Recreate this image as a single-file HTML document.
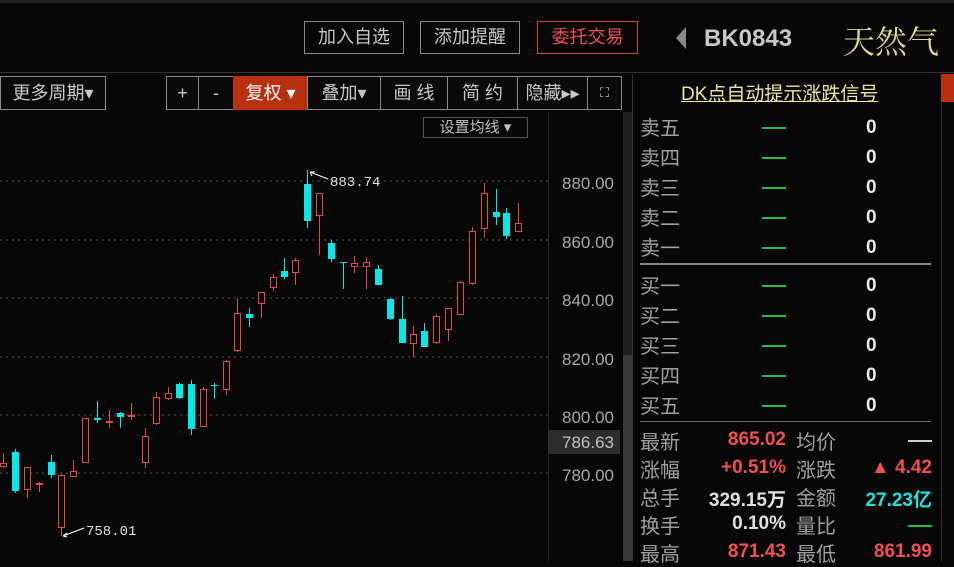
<!DOCTYPE html>
<html><head><meta charset="utf-8"><style>
body{margin:0;width:954px;height:561px;background:#070707;overflow:hidden;position:relative;font-family:"Liberation Sans","Noto Sans CJK SC",sans-serif;color:#c8c8c8}
.a{position:absolute;white-space:nowrap}
.btn{position:absolute;top:21px;height:33px;border:1px solid #8a8a8a;box-sizing:border-box;font-size:18px;line-height:31px;text-align:center;color:#c8c8c8}
.tb{position:absolute;top:76px;height:34px;border:1px solid #8a8a8a;box-sizing:border-box;font-size:18px;line-height:32px;text-align:center;color:#c8c8c8;background:#0a0a0a}
.lb{position:absolute;left:640px;font-size:20px;color:#a0a0a0}
.dash{position:absolute;left:762px;width:24px;height:2px;background:#20c040}
.z{position:absolute;left:866px;font-size:19px;font-weight:bold;color:#e8e8e8}
.v{position:absolute;font-size:19px;font-weight:bold;text-align:right}
</style></head><body>
<div class="a" style="left:0;top:0;width:954px;height:3px;background:#222"></div>
<div class="btn" style="left:304px;width:100px">加入自选</div>
<div class="btn" style="left:420px;width:100px">添加提醒</div>
<div class="btn" style="left:537px;width:101px;border-color:#d84040;color:#f05050">委托交易</div>
<div class="a" style="left:676px;top:27px;width:0;height:0;border-top:11px solid transparent;border-bottom:11px solid transparent;border-right:10px solid #888"></div>
<div class="a" style="left:704px;top:25px;font-size:24px;font-weight:bold;color:#c8c8c8">BK0843</div>
<div class="a" style="left:843px;top:17px;font-size:32px;color:#e0d890;font-family:'Noto Serif CJK SC',serif">天然气</div>
<div class="a" style="left:0;top:72px;width:954px;height:1px;background:#333"></div>
<div class="tb" style="left:0;width:106px">更多周期▾</div>
<div class="tb" style="left:166px;width:33px">+</div>
<div class="tb" style="left:198px;width:36px">-</div>
<div class="tb" style="left:233px;width:75px;background:#b83010;color:#fff;border-color:#b83010">复权 ▾</div>
<div class="tb" style="left:307px;width:74px">叠加▾</div>
<div class="tb" style="left:380px;width:68px">画 线</div>
<div class="tb" style="left:447px;width:71px">简 约</div>
<div class="tb" style="left:517px;width:71px">隐藏▸▸</div>
<div class="tb" style="left:587px;width:35px;font-size:13px">⛶</div>
<div class="a" style="left:423px;top:117px;width:105px;height:21px;border:1px solid #555;box-sizing:border-box;font-size:15px;line-height:19px;text-align:center;color:#c0c0c0">设置均线 ▾</div>
<div class="a" style="left:548px;top:112px;width:1px;height:449px;background:#222"></div>
<div class="a" style="left:623px;top:112px;width:9px;height:449px;background:#1e1e1e"></div>
<div class="a" style="left:623px;top:355px;width:9px;height:206px;background:#3a3a3a"></div>
<svg class="a" style="left:0;top:0" width="620" height="561">
<g stroke="#555" stroke-dasharray="2,4" stroke-width="1">
<line x1="0" y1="181" x2="548" y2="181"/><line x1="0" y1="240" x2="548" y2="240"/><line x1="0" y1="298" x2="548" y2="298"/><line x1="0" y1="357" x2="548" y2="357"/><line x1="0" y1="415" x2="548" y2="415"/><line x1="0" y1="473" x2="548" y2="473"/></g>
<g font-size="17" fill="#a8a8a8" font-family="Liberation Sans" text-anchor="end">
<text x="614" y="189">880.00</text><text x="614" y="248">860.00</text><text x="614" y="306">840.00</text><text x="614" y="365">820.00</text><text x="614" y="423">800.00</text><text x="614" y="481">780.00</text></g>
<rect x="548" y="430" width="72" height="24" fill="#2c2c2c"/>
<text x="614" y="448" font-size="17" fill="#c0c0c0" text-anchor="end" font-family="Liberation Sans">786.63</text>
<g id="c"></g>
<text x="330" y="186" font-size="14" fill="#e0e0e0" font-family="Liberation Mono">883.74</text>
<path d="M310 172 L328 179 M310 172 l5 0 M310 172 l2 4" stroke="#fff" fill="none"/>
<text x="86" y="535" font-size="14" fill="#e0e0e0" font-family="Liberation Mono">758.01</text>
<path d="M63 536 L84 528 M63 536 l4 -3 M63 536 l4 1" stroke="#fff" fill="none"/>
</svg>
<div class="a" style="left:632px;top:74px;width:308px;height:487px;border-left:1px solid #333;border-right:1px solid #333"></div>
<div class="a" style="left:941px;top:74px;width:13px;height:28px;background:#b83010"></div>
<div class="a" style="left:681px;top:79px;font-size:19px;color:#e8e8a0;text-decoration:underline">DK点自动提示涨跌信号</div>
<div class="lb" style="top:112px">卖五</div><div class="dash" style="top:127px"></div><div class="z" style="top:117px">0</div>
<div class="lb" style="top:142px">卖四</div><div class="dash" style="top:157px"></div><div class="z" style="top:147px">0</div>
<div class="lb" style="top:172px">卖三</div><div class="dash" style="top:187px"></div><div class="z" style="top:177px">0</div>
<div class="lb" style="top:202px">卖二</div><div class="dash" style="top:217px"></div><div class="z" style="top:207px">0</div>
<div class="lb" style="top:232px">卖一</div><div class="dash" style="top:247px"></div><div class="z" style="top:237px">0</div>
<div class="a" style="left:640px;top:263px;width:291px;height:2px;background:#888"></div>
<div class="lb" style="top:270px">买一</div><div class="dash" style="top:285px"></div><div class="z" style="top:275px">0</div>
<div class="lb" style="top:300px">买二</div><div class="dash" style="top:315px"></div><div class="z" style="top:305px">0</div>
<div class="lb" style="top:330px">买三</div><div class="dash" style="top:345px"></div><div class="z" style="top:335px">0</div>
<div class="lb" style="top:360px">买四</div><div class="dash" style="top:375px"></div><div class="z" style="top:365px">0</div>
<div class="lb" style="top:390px">买五</div><div class="dash" style="top:405px"></div><div class="z" style="top:395px">0</div>
<div class="a" style="left:640px;top:421px;width:291px;height:1px;background:#666"></div>
<div class="lb" style="top:426px">最新</div><div class="v" style="top:429px;right:168px;color:#f05050">865.02</div>
<div class="lb" style="top:426px;left:796px">均价</div><div class="a" style="left:908px;top:440px;width:24px;height:2px;background:#ccc"></div>
<div class="lb" style="top:454px">涨幅</div><div class="v" style="top:457px;right:168px;color:#f05050">+0.51%</div>
<div class="lb" style="top:454px;left:796px">涨跌</div><div class="v" style="top:457px;right:22px;color:#f05050">▲ 4.42</div>
<div class="lb" style="top:482px">总手</div><div class="v" style="top:485px;right:168px;color:#e0e0e0">329.15万</div>
<div class="lb" style="top:482px;left:796px">金额</div><div class="v" style="top:485px;right:22px;color:#20e0e0">27.23亿</div>
<div class="lb" style="top:510px">换手</div><div class="v" style="top:513px;right:168px;color:#e0e0e0">0.10%</div>
<div class="lb" style="top:510px;left:796px">量比</div><div class="a" style="left:908px;top:525px;width:24px;height:2px;background:#20c040"></div>
<div class="lb" style="top:538px">最高</div><div class="v" style="top:541px;right:168px;color:#f05050">871.43</div>
<div class="lb" style="top:538px;left:796px">最低</div><div class="v" style="top:541px;right:22px;color:#f05050">861.99</div>
<script>
var d=[[2,453,468,463,467,0],[12,449,493,452,491,1],[22,467,498,467,490,0],[32,482,492,483,485,0],[42,455,478,462,475,1],[51,474,536,475,528,0],[61,460,477,471,477,0],[71,418,463,418,463,0],[81,401,423,418,420,1],[91,410,428,421,423,0],[100,412,428,413,417,1],[110,403,420,415,417,0],[121,428,468,436,463,0],[131,392,425,397,424,0],[141,387,400,393,399,0],[150,383,399,384,398,1],[160,380,435,384,429,1],[170,387,427,389,427,0],[180,383,399,385,386,1],[190,360,395,361,390,0],[199,298,352,313,351,0],[209,308,327,314,318,1],[219,292,318,292,304,0],[229,274,291,277,288,0],[239,258,279,271,277,1],[248,258,285,260,273,0],[258,170,228,184,221,1],[268,193,255,193,216,0],[278,240,262,243,259,1],[288,262,289,262,263,1],[298,256,273,263,267,0],[308,257,289,262,267,0],[318,265,285,269,285,1],[328,298,320,299,319,1],[338,296,343,319,343,1],[347,326,357,334,344,0],[357,323,347,331,347,1],[367,314,344,316,343,0],[377,308,341,308,330,0],[387,281,315,282,315,0],[397,227,285,231,284,0],[407,183,237,193,229,0],[417,189,225,212,217,1],[426,208,239,213,236,1],[436,203,232,223,232,0]];
var s='';d.forEach(function(c){var x=Math.round(c[0]*1.186+1);var col=c[5]?'#00e8e8':'#e84848';s+='<line x1="'+(x+.5)+'" y1="'+c[1]+'" x2="'+(x+.5)+'" y2="'+c[2]+'" stroke="'+col+'"/>';
if(c[5])s+='<rect x="'+(x-3)+'" y="'+c[3]+'" width="7" height="'+Math.max(1,c[4]-c[3])+'" fill="'+col+'"/>';
else s+='<rect x="'+(x-2.5)+'" y="'+(c[3]+.5)+'" width="6" height="'+Math.max(1,c[4]-c[3]-1)+'" fill="#070707" stroke="'+col+'"/>';});
document.getElementById('c').innerHTML=s;
</script>
</body></html>
